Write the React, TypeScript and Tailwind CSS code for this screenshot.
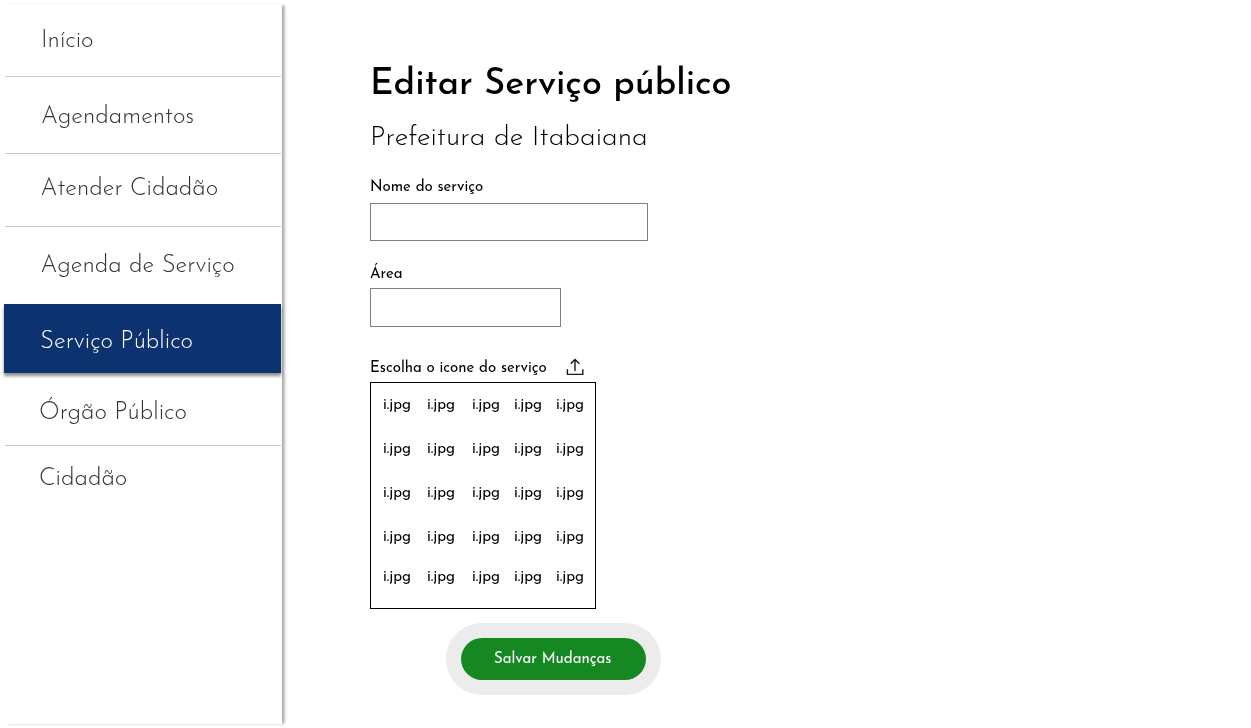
const menu = [
  { label: "Início", row: "ml-px h-[73px] pt-[25px] pl-9 border-b border-[#c8caca]" },
  { label: "Agendamentos", row: "ml-px h-[77px] pt-7 pl-9 border-b border-[#c8caca]" },
  { label: "Atender Cidadão", row: "ml-px h-[73px] pt-[23px] pl-[35.5px] border-b border-[#c8caca]" },
  { label: "Agenda de Serviço", row: "ml-px h-[77px] pt-[27px] pl-[35.5px]" },
  {
    label: "Serviço Público",
    row: "h-[69px] pt-[26px] pl-9 bg-[#0c326f] text-white shadow-[0_3px_3px_rgba(0,0,0,0.45)]",
  },
  { label: "Órgão Público", row: "ml-px h-[73px] pt-7 pl-[34px] border-b border-[#c8caca]" },
  { label: "Cidadão", row: "ml-px pt-[21px] pl-[34px]" },
];

const iconRows = [0, 1, 2, 3, 4];
const iconColumns = [0, 1, 2, 3, 4];

function Sidebar() {
  return (
    <nav className="mt-1 ml-1 h-[720px] w-[278px] shrink-0 bg-white text-2xl leading-6 font-light text-[#333] shadow-[3px_0_3px_-0.5px_rgba(0,0,0,0.36)]">
      <ul className="w-[277px]">
        {menu.map((item) => (
          <li key={item.label} className={item.row}>
            <a href="#" className="block leading-6">
              {item.label}
            </a>
          </li>
        ))}
      </ul>
    </nav>
  );
}

function UploadIcon() {
  return (
    <svg className="-mt-[3px] h-[18px] w-[18px]" viewBox="0 0 18 18" fill="none" stroke="#1a1a1a" strokeWidth="1.4">
      <path d="M9 13V1.8M4.6 5.8 9 1.4l4.4 4.4" />
      <path d="M1.4 11.2v5.2h15.4v-5.2" strokeLinejoin="round" />
    </svg>
  );
}

export default function App() {
  return (
    <div className="flex h-[728px] w-[1251px] overflow-hidden font-['Josefin_Sans','Lato',sans-serif] text-black will-change-transform">
      <Sidebar />
      <main className="ml-[88px] pt-[67px]">
        <h1 className="text-4xl leading-9 font-medium">Editar Serviço público</h1>
        <h2 className="mt-[21px] text-[28px] leading-7 font-light">Prefeitura de Itabaiana</h2>

        <form className="text-[15px] leading-[15px] font-normal">
          <label className="mt-7 block" htmlFor="nome">Nome do serviço</label>
          <input id="nome" className="mt-2 block h-[38px] w-[278px] border border-[#808080] px-2 outline-none" />

          <label className="mt-[26px] block" htmlFor="area">Área</label>
          <input id="area" className="mt-1.5 block h-[39px] w-[191px] border border-[#808080] px-2 outline-none" />

          <div className="mt-[31px] flex h-6 pt-[3px]">
            <span className="w-[196px]">Escolha o icone do serviço</span>
            <UploadIcon />
          </div>

          <div className="grid h-[227px] w-[226px] grid-cols-[44px_45px_42px_42px_40px] grid-rows-[44px_44px_44px_40px_40px] border border-black pt-[15px] pl-3">
            {iconRows.map((row) =>
              iconColumns.map((column) => (
                <span key={`${row}-${column}`}>i.jpg</span>
              )),
            )}
          </div>

          <div className="mt-3.5 ml-[76px] flex h-[72px] w-[215px] items-center justify-center rounded-full bg-[#ececec]">
            <button type="button" className="h-[42px] w-[185px] rounded-full bg-[#168821] pr-[1.5px] font-normal text-white">
              Salvar Mudanças
            </button>
          </div>
        </form>
      </main>
    </div>
  );
}
